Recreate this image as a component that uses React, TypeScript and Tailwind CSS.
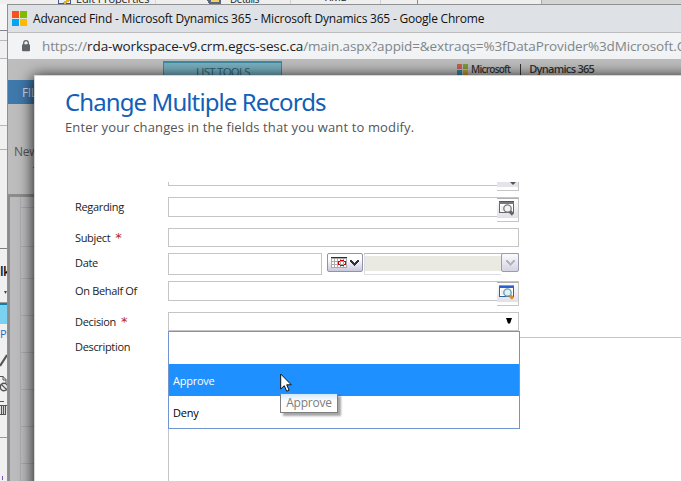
import React from "react";

const UI = "font-['Open_Sans','Noto_Sans',sans-serif]";
const NOTO = "font-['Noto_Sans','Open_Sans',sans-serif]";

function Logo({ size, dim }: { size: number; dim?: boolean }) {
  const c = dim ? ["#c9624a", "#7d9c3c", "#2f86a8", "#c29a35"] : ["#f6511d", "#80bb01", "#02a4ef", "#ffb902"];
  return (
    <svg width={size} height={size} viewBox="0 0 15 15" shapeRendering="crispEdges" className="shrink-0">
      <path d="M0 0h7v7H0z" fill={c[0]} />
      <path d="M8 0h7v7H8z" fill={c[1]} />
      <path d="M0 8h7v7H0z" fill={c[2]} />
      <path d="M8 8h7v7H8z" fill={c[3]} />
    </svg>
  );
}

function Background() {
  return (
    <div className={`absolute inset-0 bg-[#f0f0f0] ${UI}`}>
      <div className="relative h-[4px] overflow-hidden bg-[#efefef]">
        <svg className="absolute left-[58px] top-0" width="16" height="4" shapeRendering="crispEdges">
          <path d="M0 0v3h12V0" fill="#e8eefc" stroke="#44598c" />
          <path d="M4 3L9 0h4L7 4z" fill="#e0b030" />
        </svg>
        <span className="absolute left-[76px] top-[-9px] whitespace-nowrap text-[11px] leading-[16px] tracking-[-0.15px] text-[#222]">Edit Properties</span>
        <svg className="absolute left-[207px] top-0" width="16" height="4" shapeRendering="crispEdges">
          <path d="M0 0h14v4H2z" fill="#5a6a80" />
          <path d="M4 0h8v2H4z" fill="#f5d060" />
        </svg>
        <span className="absolute left-[230px] top-[-9px] text-[10px] leading-[16px] tracking-[-0.4px] text-[#222]">Details</span>
        <span className="absolute left-[325px] top-[-11px] text-[11px] leading-[16px] tracking-[-0.4px] text-[#222]">XML</span>
        <div className="absolute left-[155px] top-0 h-[4px] w-px bg-[#d8d8d8]" />
        <div className="absolute left-[290px] top-0 h-[4px] w-px bg-[#d0d0d0]" />
        <div className="absolute left-[380px] top-0 h-[4px] w-px bg-[#d0d0d0]" />
        <div className="absolute left-[417px] top-0 h-[4px] w-px bg-[#888]" />
        <div className="absolute left-[541px] top-0 h-[4px] w-[140px] border-l border-[#aaa] bg-[#d4d4d4]" />
      </div>
      <div className="flex w-[7px] flex-col overflow-hidden">
        <div className="h-[27px] shrink-0 border-b border-[#80838a] bg-[#f6f6f6]" />
        <div className="h-[10px] shrink-0 border-b border-[#b8b8bc]" />
        <div className="h-[18px] shrink-0 border-b border-[#b8b8bc]" />
        <div className="h-[67px] shrink-0 border-b border-[#b8b8bc] bg-[#f4f4f4]" />
        <div className="h-[24px] shrink-0 border-b border-[#b0b0b8]" />
        <div className="h-[99px] shrink-0 border-b border-[#808080]" />
        <div className="h-[54px] shrink-0 border-b border-[#999] pt-[13px] text-[13px] font-semibold leading-[18px] tracking-[-0.5px] text-[#111]">
          <span className="block">lk</span>
          <svg width="7" height="5" className="mt-[10px]"><path d="M4 1h3L5.500 4z" fill="#444" /></svg>
        </div>
        <div className="h-[21px] shrink-0 border-t-2 border-[#0b7fae] bg-[#79d2f0]" />
        <div className="h-[24px] shrink-0 text-[11px] leading-[20px] tracking-[-0.5px] text-[#2a6ac0]">PI</div>
        <svg width="7" height="135" fill="none" stroke="#555" className="shrink-0">
          <path d="M0 18L7 7" strokeWidth="2.200" />
          <path d="M0 28.500h3l3 3V35M3 28v4h3" />
          <circle cx="4" cy="39" r="3.700" strokeWidth="1.500" /><path d="M1.500 36.500l5 5" strokeWidth="1.300" />
          <path d="M0 53.500h4M0 57.500h7M0 66.500h6M1.500 57v9M3.500 57v9M5.500 57v9" strokeWidth="1.200" />
          <path d="M0 89.500h7" stroke="#999" />
          <path d="M2.500 132v-4" stroke="#7a50b0" />
        </svg>
      </div>
    </div>
  );
}

function Ribbon() {
  return (
    <div className={`h-[421px] overflow-hidden bg-[#bdbdbd] ${UI}`}>
      <div className="flex h-[20px] items-start">
        <div className="ml-[155px] mt-px h-[19px] w-[119px] border border-t-2 border-[#3d8ba0] bg-[#78b0c0] pl-[32px] text-[11.5px] leading-[18px] tracking-[-0.75px] text-[#2c5f70]">
          LIST TOOLS
        </div>
        <div className="ml-[175px] mt-[3px] flex items-center">
          <Logo size={11} dim />
          <span className="ml-[3px] text-[10px] font-semibold leading-[12px] tracking-[-0.75px] text-[#333]">Microsoft</span>
          <span className="ml-[10px] h-[11px] w-px bg-[#333]" />
          <span className="ml-[8px] whitespace-nowrap text-[11px] font-semibold leading-[12px] tracking-[-0.7px] text-[#333]">Dynamics 365</span>
        </div>
      </div>
      <div className="h-[24px] w-[40px] bg-[#3f78ab] pl-[14px] text-[12px] leading-[25px] tracking-[-0.4px] text-[#cfd8e2]">FILE</div>
      <div className="h-[90px] pl-[6px]">
        <svg width="30" height="40" className="block">
          <path d="M19 10l5 2 3-4v14l-8-2 4-3z" fill="#b6a94c" />
          <path d="M25 22h5v14h-5z" fill="#777" />
        </svg>
        <div className="text-[12px] leading-[16px] tracking-[-0.3px] text-[#555]">New</div>
        <svg width="30" height="6" className="mt-1 block"><path d="M19 4l2-3 2 3z" fill="#444" /></svg>
      </div>
      <div className="h-[287px] border-l-2 border-t-[3px] border-[#8c8c8c] bg-[#bcbcbf] pl-[10px]">
        <div className="h-full border-l border-[#acacb0]">
          <div className="h-[11px] border-b border-[#a9a9ac]" />
          <div className="h-[39px] border-b border-[#a9a9ac]" />
          <div className="h-[32px] border-b border-[#a9a9ac]" />
          <div className="h-[37px] border-b border-[#a9a9ac]" />
          <div className="h-[37px] border-b border-[#a9a9ac]" />
          <div className="h-[37px] border-b border-[#a9a9ac]" />
          <div className="h-[37px] border-b border-[#a9a9ac]" />
          <div className="h-[37px] border-b border-[#a9a9ac]" />
        </div>
      </div>
    </div>
  );
}

function Row({ label, required, h, children }: { label: string; required?: boolean; h: string; children?: React.ReactNode }) {
  return (
    <div className={`flex items-start ${h}`}>
      <div className="w-[93px] shrink-0 whitespace-nowrap pt-[2px] text-[11px] leading-[16px] tracking-[-0.33px] text-[#222]">
        {label}
        {required && <span className="ml-[5px] font-['DejaVu_Sans',sans-serif] text-[13px] leading-[10px] text-[#b11f1f]">*</span>}
      </div>
      {children}
    </div>
  );
}

function LookupIcon({ color }: { color?: boolean }) {
  const a = color ? "#2a62d0" : "#777";
  return (
    <svg width="17" height="17" viewBox="0 0 17 17" className="block">
      <path d="M1.500 1.500h14v11h-14z" fill="#fff" stroke={color ? "#3d5c9c" : "#666"} shapeRendering="crispEdges" />
      <path d="M1 1h15v3H1z" fill={a} shapeRendering="crispEdges" />
      <path d="M1 1h15v1H1z" fill={color ? "#6fa0f0" : "#555"} shapeRendering="crispEdges" />
      <path d="M3 6h3v5H3z" fill="#ececf2" />
      <circle cx="9.500" cy="8.500" r="3.700" fill={color ? "#d9f1f7" : "#f2f2f2"} stroke={color ? "#6699aa" : "#777"} strokeWidth="1.300" />
      <path d="M12 11.500l3 3" stroke={color ? "#e08a28" : "#666"} strokeWidth="3.200" />
    </svg>
  );
}

function Lookup({ color }: { color?: boolean }) {
  return (
    <div className="flex w-[351px] items-start">
      <div className="h-[20px] w-[329px] border border-r-0 border-[#c5c5c5] bg-white" />
      <div className="h-[25px] w-[22px] border border-l-0 border-[#c5c5c5] bg-white">
        <div className="h-[20px] border-t border-[#b0b0b4] bg-gradient-to-b from-white to-[#e0e0ea] pl-[1px] pt-px">
          <LookupIcon color={color} />
        </div>
      </div>
    </div>
  );
}

function Chevron({ fill }: { fill: string }) {
  return (
    <svg width="9" height="6" viewBox="0 0 9 6" shapeRendering="crispEdges">
      <path d="M0 0h2v1h1v1h1v1h1V2h1V1h1V0h2v2H8v1H7v1H6v1H5v1H4V5H3V4H2V3H1V2H0z" fill={fill} />
    </svg>
  );
}

function DateRow() {
  return (
    <div className="flex items-start">
      <div className="h-[22px] w-[154px] border border-[#c5c5c5]" />
      <div className="ml-[5px] flex h-[19px] w-[36px] items-center rounded-[2px] border border-[#9292a8] bg-gradient-to-b from-white from-30% to-[#c8c8dc] pl-[3px]">
        <svg width="16" height="11" viewBox="0 0 16 11" shapeRendering="crispEdges">
          <path d="M0 1h16v10H0z" fill="#fff" />
          <path d="M.5 1v10M3.500 1v10M6.500 1v10M9.500 1v10M12.500 1v10M15.500 1v10M0 1.500h16M0 4.500h16M0 7.500h16M0 10.500h16" stroke="#aaa" />
          <path d="M0 0h16v1H0z" fill="#003399" />
          <path d="M9 3h4v1H9zM13 4h2v1h-2zM14 5h1v2h-1zM13 7h2v1h-2zM9 8h4v1H9zM7 7h2v1H7zM7 5h1v2H7zM7 4h2v1H7z" fill="#d00000" />
        </svg>
        <span className="ml-[3px] flex"><Chevron fill="#333" /></span>
      </div>
      <div className="ml-px flex h-[22px] w-[155px] items-start border-t border-[#bbb]">
        <div className="h-[21px] w-[137px] border-b border-l border-[#dedee6] pt-[2px]">
          <div className="h-[15px] bg-[#eaeae2]" />
        </div>
        <div className="-mt-px flex h-[19px] w-[18px] items-center justify-center rounded-[2px] border border-[#9a9ab0] bg-gradient-to-b from-[#fafaff] to-[#d4d4e2]">
          <Chevron fill="#b4b4be" />
        </div>
      </div>
    </div>
  );
}

function Dialog() {
  return (
    <div className="absolute left-[34px] top-[75px] h-[420px] w-[660px] border border-[#d6d6d6] bg-white shadow-[0_2px_14px_1px_rgba(0,0,0,0.85)]">
      <div className="flex h-[106px] flex-col pl-[30px] pt-[9px]">
        <h1 className={`text-[24px] leading-[34px] tracking-[-0.9px] text-[#1160b7] ${NOTO}`}>Change Multiple Records</h1>
        <p className={`text-[13px] leading-[17px] tracking-[0.13px] text-[#555] ${UI}`}>Enter your changes in the fields that you want to modify.</p>
      </div>
      <div className={`flex h-[312px] flex-col overflow-hidden pl-[40px] ${UI}`}>
        <div className="flex h-[15px] items-start pl-[93px]">
          <div className="h-[4px] w-[329px] border-b border-l border-[#c5c5c5]" />
          <div className="flex h-[9px] w-[22px] flex-col border-b border-r border-[#c5c5c5]">
            <div className="h-[5px] bg-[#e4e4ea] pl-[13px]">
              <svg width="6" height="4" className="block"><path d="M0 0h6L3 3z" fill="#555" /></svg>
            </div>
          </div>
        </div>
        <Row label="Regarding" h="h-[31px]"><Lookup /></Row>
        <Row label="Subject" required h="h-[25px]">
          <div className="h-[19px] w-[351px] border border-[#c5c5c5]" />
        </Row>
        <Row label="Date" h="h-[28px]"><DateRow /></Row>
        <Row label="On Behalf Of" h="h-[31px]"><Lookup color /></Row>
        <Row label="Decision" required h="h-[25px]">
          <div className="flex h-[19px] w-[351px] justify-end border border-[#c5c5c5] pr-[6px] pt-[5px]">
            <svg width="6" height="7"><path d="M0 0h6L4 5.500H2z" fill="#000" /></svg>
          </div>
        </Row>
        <Row label="Description" h="h-[157px]">
          <div className="h-[157px] w-[540px] border border-[#c5c5c5]" />
        </Row>
      </div>
    </div>
  );
}

function Dropdown() {
  return (
    <div className={`absolute left-[168px] top-[331px] flex h-[98px] w-[352px] flex-col border border-[#7095d2] bg-white text-[11px] leading-[33px] tracking-[-0.25px] ${UI}`}>
      <div className="h-[32px]" />
      <div className="h-[32px] bg-[#1e90ff] pl-[4px] text-white">Approve</div>
      <div className="h-[32px] pl-[4px] text-black">Deny</div>
    </div>
  );
}

export default function App() {
  return (
    <div className="relative h-[481px] w-[681px] overflow-hidden">
      <Background />
      <div className={`absolute left-[7px] top-[4px] h-[480px] w-[680px] border-l border-t border-[#909090] ${UI}`}>
        <div className="flex h-[27px] items-center bg-[#dee1e6] pl-[4px]">
          <Logo size={15} />
          <span className="ml-[6px] whitespace-nowrap text-[12px] leading-[16px] tracking-[-0.21px] text-[#111]">
            Advanced Find - Microsoft Dynamics 365 - Microsoft Dynamics 365 - Google Chrome
          </span>
        </div>
        <div className="flex h-[28px] items-center overflow-hidden border-y border-[#bbb] bg-[#f1f3f4] pl-[14px]">
          <svg width="8" height="12" viewBox="0 0 8 12" className="shrink-0">
            <path d="M1.700 5V3a2.300 2.300 0 0 1 4.600 0v2" fill="none" stroke="#5f6368" strokeWidth="1.300" />
            <rect y="4.200" width="8" height="7" rx="1" fill="#5f6368" />
          </svg>
          <span className="ml-[12px] whitespace-nowrap text-[13.500px] leading-[20px] tracking-[-0.12px] text-[#202124]">
            <span className="text-[#80868b]">https://</span>rda-workspace-v9.crm.egcs-sesc.ca
            <span className="text-[#80868b]">/main.aspx?appid=&amp;extraqs=%3fDataProvider%3dMicrosoft.C</span>
          </span>
        </div>
        <Ribbon />
      </div>
      <Dialog />
      <Dropdown />
      <div className={`absolute left-[280px] top-[393px] h-[20px] w-[58px] border border-[#7f7f7f] bg-gradient-to-b from-[#d3e7fb] to-white to-40% text-center text-[12px] leading-[18px] tracking-[-0.2px] text-[#7c7c7c] shadow-[3px_3px_2px_rgba(0,0,0,0.35)] ${UI}`}>
        Approve
      </div>
      <svg className="absolute left-[280px] top-[373px]" width="13" height="20" viewBox="0 0 13 20">
        <path d="M.7 1v15l3.600-3.300 2.400 5.500 2.400-1-2.400-5.400h4.600z" fill="#fff" stroke="#111" />
      </svg>
    </div>
  );
}
